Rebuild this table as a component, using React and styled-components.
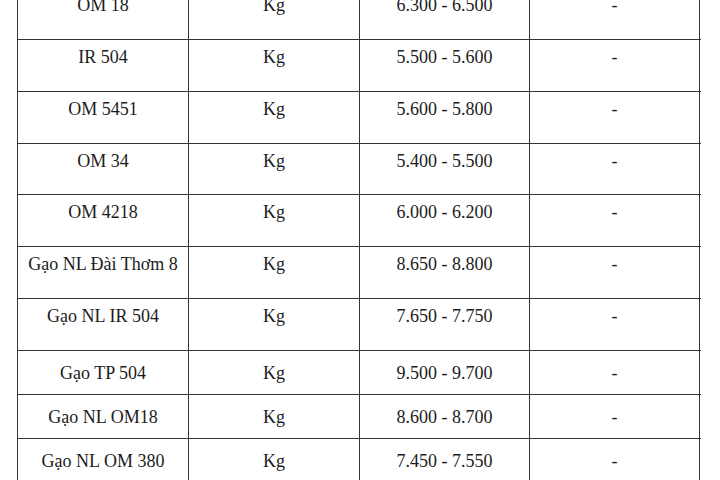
import React from 'react';
import styled, { createGlobalStyle } from 'styled-components';

const GlobalStyle = createGlobalStyle`
  html, body {
    margin: 0;
    padding: 0;
    background: #fff;
  }
  body {
    font-family: "Liberation Serif", "Times New Roman", serif;
    color: #1c1c1c;
    overflow: hidden;
  }
`

const Page = styled.div`
  width: 720px;
  height: 480px;
  overflow: hidden;
  background: #fff;
`

const Table = styled.div`
  width: 683px;
  margin-left: 17px;
  margin-top: -13px;
  border-left: 1px solid #353535;
  border-top: 1px solid #353535;
`

const Row = styled.div`
  display: grid;
  grid-template-columns: 171px 171px 170px 170px;
  height: ${props => props.h}px;
  box-sizing: border-box;
  border-bottom: 1px solid #353535;
`

const Cell = styled.div`
  display: flex;
  justify-content: center;
  align-items: ${props => (props.short ? 'center' : 'flex-start')};
  padding-top: ${props => (props.short ? 0 : 7)}px;
  box-sizing: border-box;
  border-right: 1px solid #353535;
  font-size: 18px;
  line-height: 20px;
  white-space: nowrap;
`

const rows = [
  { name: 'OM 18', price: '6.300 - 6.500', h: 52 },
  { name: 'IR 504', price: '5.500 - 5.600', h: 52 },
  { name: 'OM 5451', price: '5.600 - 5.800', h: 52 },
  { name: 'OM 34', price: '5.400 - 5.500', h: 51 },
  { name: 'OM 4218', price: '6.000 - 6.200', h: 52 },
  { name: 'Gạo NL Đài Thơm 8', price: '8.650 - 8.800', h: 52 },
  { name: 'Gạo NL IR 504', price: '7.650 - 7.750', h: 52 },
  { name: 'Gạo TP 504', price: '9.500 - 9.700', h: 44, short: true },
  { name: 'Gạo NL OM18', price: '8.600 - 8.700', h: 44, short: true },
  { name: 'Gạo NL OM 380', price: '7.450 - 7.550', h: 44, short: true },
];

export default function App() {
  return (
    <Page>
      <GlobalStyle />
      <Table>
        {rows.map(r => (
          <Row key={r.name} h={r.h}>
            <Cell short={r.short}>{r.name}</Cell>
            <Cell short={r.short}>Kg</Cell>
            <Cell short={r.short}>{r.price}</Cell>
            <Cell short={r.short}>-</Cell>
          </Row>
        ))}
      </Table>
    </Page>
  );
}
